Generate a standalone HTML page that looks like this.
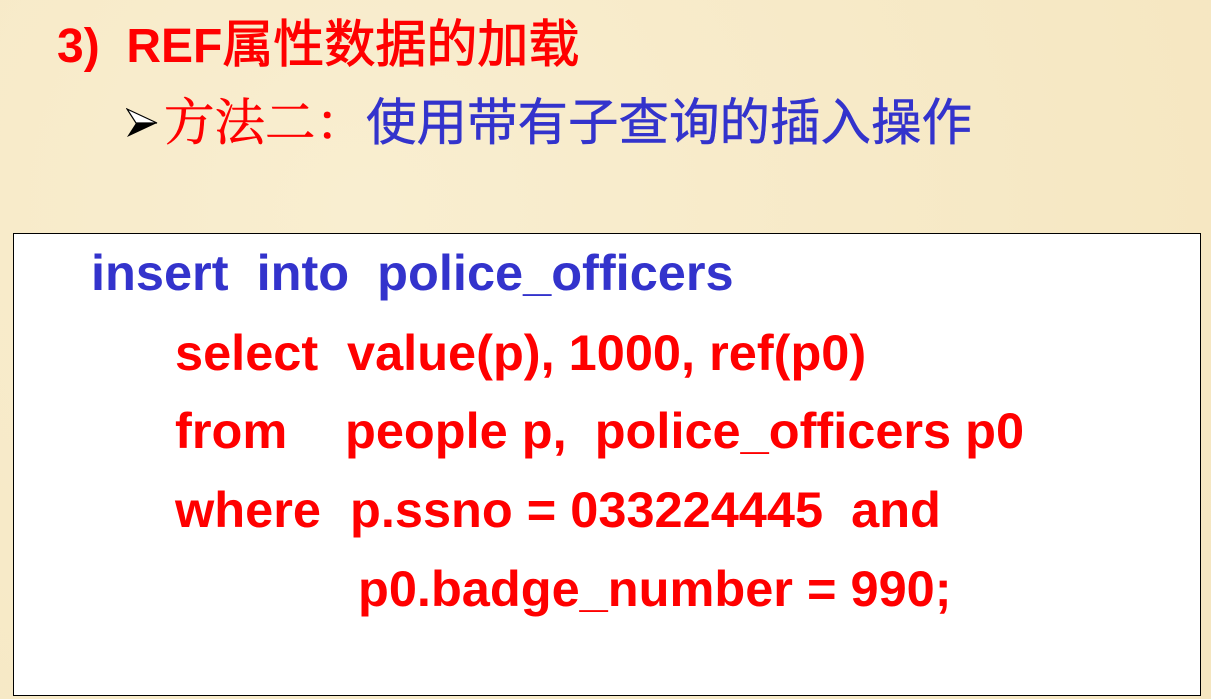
<!DOCTYPE html>
<html><head><meta charset="utf-8"><style>
body{margin:0;width:1211px;height:699px;overflow:hidden;background:#f8ecca;position:relative;font-family:"Liberation Sans","Noto Sans CJK SC",sans-serif;}
.a{position:absolute;white-space:pre;font-weight:bold;}
.c{font-size:50.5px;line-height:50px;}
.r{color:#ff0000}.b{color:#3333cc}
.box{position:absolute;left:13px;top:233px;width:1186px;height:461px;background:#fff;border:1px solid #000;}
</style></head><body>
<div style="position:absolute;inset:0;background:radial-gradient(circle at 30% 30%,#f9eed0,#f5e6c0);"></div>
<div class="a r" style="left:57px;top:12px;font-size:48px;line-height:56px;">3)  REF<span style="font-family:'Noto Sans CJK SC',sans-serif;font-size:51px;font-weight:normal;-webkit-text-stroke:1px #f00;">属性数据的加载</span></div>
<svg style="position:absolute;left:126px;top:108px" width="32" height="30" viewBox="0 0 32 30"><path d="M1 1 L31 15 L1 29 L10 15 Z" fill="#000"/><path d="M1 1 L31 15 L10 15 Z" fill="#fff" stroke="#000" stroke-width="1.2"/></svg>
<div class="a" style="left:164px;top:90px;font-size:50.5px;line-height:56px;font-family:'Noto Serif CJK SC','Noto Sans CJK SC',serif;font-weight:normal;"><span class="r" style="-webkit-text-stroke:0.6px #f00;">方法二：</span><span class="b" style="font-family:'Noto Sans CJK SC',sans-serif;-webkit-text-stroke:0.5px #33c;">使用带有子查询的插入操作</span></div>
<div class="box"></div>
<div class="a c b" style="left:91px;top:248px;">insert  into  police_officers</div>
<div class="a c r" style="left:175px;top:328px;">select</div>
<div class="a c r" style="left:347px;top:328px;">value(p), 1000, ref(p0)</div>
<div class="a c r" style="left:175px;top:406px;">from</div>
<div class="a c r" style="left:345px;top:406px;">people p,  police_officers p0</div>
<div class="a c r" style="left:175px;top:485px;">where</div>
<div class="a c r" style="left:350px;top:485px;">p.ssno = 033224445  and</div>
<div class="a c r" style="left:358px;top:564px;">p0.badge_number = 990;</div>
</body></html>
